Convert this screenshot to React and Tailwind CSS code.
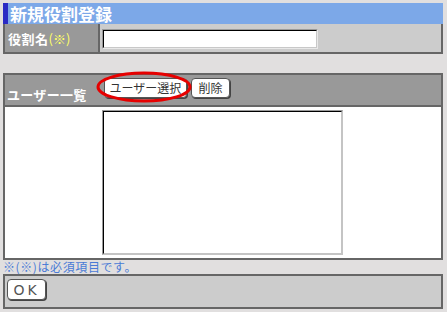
export default function App() {
  const jp = { fontFamily: '"Noto Sans CJK JP", "Noto Sans", sans-serif' };
  return (
    <div className="w-[447px] h-[312px] bg-[#e1dfdf] pt-[3px] pl-[3px] pr-[4px] overflow-hidden" style={jp}>
      {/* title */}
      <div className="h-[21px] bg-[#7ca8e8] border-l-[5px] border-[#2a2ac4] text-white font-bold text-[17px] leading-[21px] pl-[2px]">
        新規役割登録
      </div>
      {/* role name row */}
      <div className="flex h-[30px] border-2 border-t-0 border-[#666666]">
        <div className="w-[95px] bg-[#999999] border-r-2 border-[#666666] flex items-center pl-[3px] text-[13px] leading-none">
          <span className="text-white font-bold tracking-[0.5px]">役割名</span>
          <span className="text-[#ffff66]">(※)</span>
        </div>
        <div className="flex-1 bg-[#cccccc] flex items-center pl-[2px] pt-[1px]">
          <div className="w-[216px] h-[20px] border border-t-[#9a9a9a] border-l-[#9a9a9a] border-b-[#e8e8e8] border-r-[#e8e8e8] bg-white">
            <div className="w-full h-full border border-t-black border-l-black border-b-[#c8c8c8] border-r-[#c8c8c8]" />
          </div>
        </div>
      </div>
      <div className="h-[19px]" />
      {/* user list */}
      <div className="relative border-2 border-[#666666]">
        <div className="flex h-[32px] bg-[#999999] border-b-2 border-[#666666]">
          <div className="w-[95px] flex items-end pb-[4px] pl-[2px] text-white font-bold text-[13px] leading-none tracking-[0.3px]">
            ユーザー一覧
          </div>
          <div className="flex items-start pt-[3px] pl-[4px] gap-[4px]">
            <button className="h-[20px] w-[83px] bg-white rounded-[4px] border border-[#555] shadow-[1px_1px_0_#444] text-[#333] text-[12px] leading-none flex items-center justify-center whitespace-nowrap">
              ユーザー選択
            </button>
            <button className="h-[20px] w-[39px] bg-white rounded-[4px] border border-[#555] shadow-[1px_1px_0_#444] text-[#333] text-[12px] leading-none flex items-center justify-center">
              削除
            </button>
          </div>
        </div>
        <div className="h-[151px] bg-white flex pt-[3px] pl-[97px]">
          <div className="w-[241px] h-[145px] border border-t-[#9a9a9a] border-l-[#9a9a9a] border-b-[#c4c4c4] border-r-[#c4c4c4]">
            <div className="w-full h-full border border-t-black border-l-black border-b-[#c4c4c4] border-r-[#c4c4c4] bg-white" />
          </div>
        </div>
        <svg className="absolute left-[90px] top-[-4px]" width="100" height="34" viewBox="0 0 100 34">
          <ellipse cx="49" cy="16" rx="46" ry="14" fill="none" stroke="#e60000" strokeWidth="3" />
        </svg>
      </div>
      <div className="h-[14px] text-[#4a7bd6] text-[12px] leading-[14px] tracking-[0.6px]">※(※)は必須項目です。</div>
      <div className="h-[35px] bg-[#cccccc] border-2 border-[#666666] flex items-start pt-[3px] pl-[2px]">
        <button className="h-[21px] w-[39px] bg-white rounded-[4px] border border-[#555] shadow-[1px_1px_0_#444] text-[#555] text-[14px] leading-none tracking-[3px] flex items-center justify-center" style={{ fontFamily: '"DejaVu Sans", sans-serif' }}>
          OK
        </button>
      </div>
    </div>
  );
}
